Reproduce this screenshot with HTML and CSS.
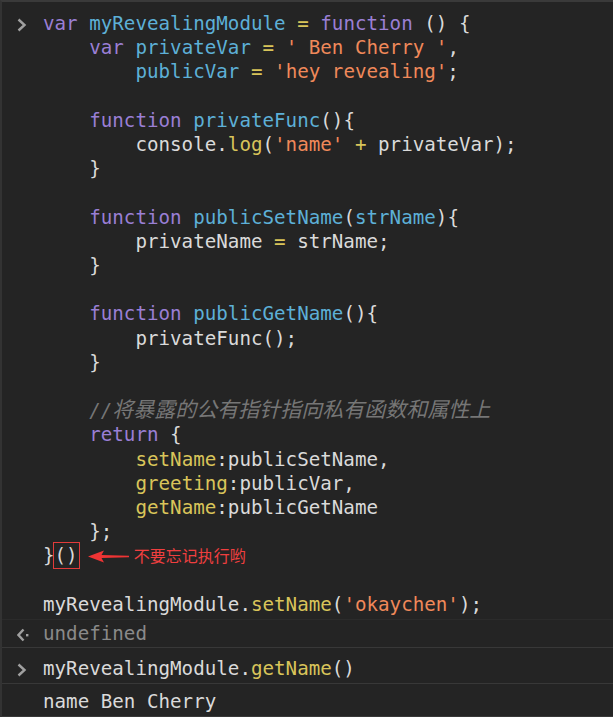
FILE: index.html
```html
<!DOCTYPE html>
<html lang="en">
<head>
    <meta charset="UTF-8">
    <meta name="viewport" content="width=device-width, initial-scale=1.0">
    <title>Console</title>
    <link rel="stylesheet" href="styles.css">
</head>
<body>
    <div class="console">
        <div class="msg msg-first">
            <span class="icon">
                <svg width="10" height="14" viewBox="0 0 10 14"><polyline points="1.5,1.5 7.5,7 1.5,12.5" fill="none" stroke="#a0a0a0" stroke-width="2.4"/></svg>
            </span>
<pre class="code"><span class="kw">var</span> <span class="def">myRevealingModule</span> <span class="op">=</span> <span class="kw">function</span> () {
    <span class="kw">var</span> <span class="def">privateVar</span> <span class="op">=</span> <span class="str">' Ben Cherry '</span>,
        <span class="def">publicVar</span> <span class="op">=</span> <span class="str">'hey revealing'</span>;

    <span class="kw">function</span> <span class="def">privateFunc</span>(){
        console.<span class="prop">log</span>(<span class="str">'name'</span> <span class="op">+</span> privateVar);
    }

    <span class="kw">function</span> <span class="def">publicSetName</span>(<span class="def">strName</span>){
        privateName <span class="op">=</span> strName;
    }

    <span class="kw">function</span> <span class="def">publicGetName</span>(){
        privateFunc();
    }

    <span class="comment">//<span class="cjk">将暴露的公有指针指向私有函数和属性上</span></span>
    <span class="kw">return</span> {
        <span class="prop">setName</span>:publicSetName,
        <span class="prop">greeting</span>:publicVar,
        <span class="prop">getName</span>:publicGetName
    };
}<span class="mark">()</span><svg class="arrow" width="41" height="13" viewBox="0 0 41 13"><path d="M0 6.5 L16 0.5 L13.5 5 L41 5.8 L41 7.2 L13.5 8 L16 12.5 Z" fill="#ef3434"/></svg><span class="note">不要忘记执行哟</span>

myRevealingModule.<span class="prop">setName</span>(<span class="str">'okaychen'</span>);</pre>
        </div>
        <div class="msg msg-result">
            <span class="icon">
                <svg width="12" height="14" viewBox="0 0 12 14"><polyline points="6.5,1.5 1.5,7 6.5,12.5" fill="none" stroke="#a0a0a0" stroke-width="2.4"/><rect x="9" y="6" width="2.4" height="2.4" fill="#a0a0a0"/></svg>
            </span>
            <pre class="code muted">undefined</pre>
        </div>
        <div class="msg msg-input">
            <span class="icon">
                <svg width="10" height="14" viewBox="0 0 10 14"><polyline points="1.5,1.5 7.5,7 1.5,12.5" fill="none" stroke="#a0a0a0" stroke-width="2.4"/></svg>
            </span>
            <pre class="code">myRevealingModule.<span class="prop">getName</span>()</pre>
        </div>
        <div class="msg msg-log">
            <span class="icon"></span>
            <pre class="code">name Ben Cherry</pre>
        </div>
    </div>
</body>
</html>
```

FILE: styles.css
```css
html, body{
    margin: 0;
    padding: 0;
    background-color: #242424;
}
.console{
    width: 613px;
    height: 717px;
    box-sizing: border-box;
    border-top: 2px solid #3a3a3a;
    border-left: 2px solid #333333;
    background-color: #242424;
    overflow: hidden;
}
.msg{
    display: flex;
    border-bottom: 1px solid #383838;
}
.msg-first{
    padding: 10px 0 2px;
    border-bottom-color: #2b2b2b;
}
.msg-result{
    padding: 2px 0 1px;
}
.msg-input{
    padding: 9px 0 2px;
}
.msg-log{
    padding: 6px 0 1px;
}
.icon{
    flex: 0 0 41px;
    box-sizing: border-box;
    padding-left: 15px;
    padding-top: 6px;
    height: 24px;
}
.icon svg{
    display: block;
}
.code{
    margin: 0;
    font-family: "DejaVu Sans Mono", "Liberation Mono", "Noto Sans CJK SC", monospace;
    font-size: 19.2px;
    line-height: 24.2px;
    color: #dadada;
    white-space: pre;
}
.kw{
    color: #9a7fd5;
}
.def{
    color: #5db0d7;
}
.str{
    color: #f0895a;
}
.op{
    color: #d9c45a;
}
.prop{
    color: #d9c45a;
}
.comment{
    color: #767676;
    font-style: italic;
}
.cjk{
    font-family: "Noto Sans CJK SC", sans-serif;
    font-size: 21px;
    line-height: 0;
}
.muted{
    color: #8a8a8a;
}
.mark{
    outline: 1px solid #e23b3b;
    outline-offset: 1px;
}
.arrow{
    margin-left: 10px;
    vertical-align: -1px;
}
.note{
    margin-left: 5px;
    font-family: "Noto Sans CJK SC", sans-serif;
    font-size: 16px;
    line-height: 0;
    color: #ef3f3f;
}
```
